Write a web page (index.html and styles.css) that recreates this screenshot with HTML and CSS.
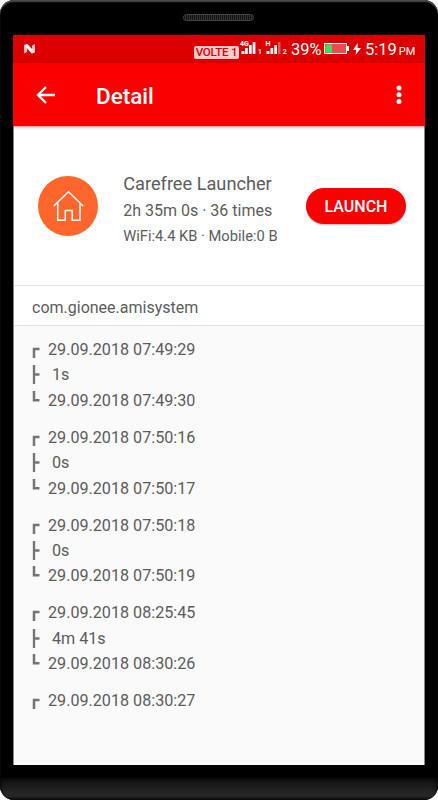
FILE: index.html
```
<!DOCTYPE html>
<html lang="en">
<head>
	<meta charset="UTF-8">
	<title>Detail</title>
	<link rel="stylesheet" href="styles.css">
</head>
<body>
	<svg class="symbols" width="0" height="0">
		<symbol id="start" viewBox="0 0 8 25"><path d="M2 21V12H7.5" fill="none" stroke="#747474" stroke-width="2.5"/></symbol>
		<symbol id="mid" viewBox="0 0 8 25"><path d="M2 3V22M2 12.5H7.5" fill="none" stroke="#747474" stroke-width="2.3"/></symbol>
		<symbol id="end" viewBox="0 0 8 25"><path d="M2 3V12.3H7.5" fill="none" stroke="#747474" stroke-width="2.5"/></symbol>
	</svg>
	<div class="phone">
		<div class="speaker"></div>
		<div class="screen">
			<div class="status">
				<svg class="n-logo" width="11" height="10" viewBox="0 0 11 10">
					<path d="M0 1.5L3 0V8L0 9.5zM8 1.5L11 0V8L8 9.5z" fill="#ffb8b8"/>
					<path d="M0 1L3.4 0L11 8.2L7.6 9.5z" fill="#fff"/>
				</svg>
				<span class="volte">VOLTE 1</span>
				<svg class="signal" width="50" height="16" viewBox="0 0 50 16">
					<g fill="#fff">
						<path d="M1.5 11h3v3h-3zM5 8h2.7v6H5zM9 5h2.7v9H9zM12.7 2h2.7v12h-2.7z"/>
						<path d="M26.5 11h3v3h-3zM30.5 8h2.7v6h-2.7zM34.3 5H37v9h-2.7z"/>
						<path d="M38 2h2.5v12H38z" opacity=".35"/>
						<text x="0" y="6" font-size="7" font-weight="700">4G</text>
						<text x="25.5" y="6" font-size="7" font-weight="700">H</text>
						<text x="17.8" y="14" font-size="7.5" font-weight="500">1</text>
						<text x="42.5" y="14" font-size="7.5" font-weight="500">2</text>
					</g>
				</svg>
				<span class="percent">39%</span>
				<svg class="battery" width="25" height="12" viewBox="0 0 25 12">
					<rect x=".5" y=".5" width="22" height="10" fill="#e84c4c" stroke="#fff"/>
					<path d="M1.5 1.5h6.5v8h-6.5z" fill="#3ddc62"/>
					<path d="M23 3h2v5h-2z" fill="#fff"/>
				</svg>
				<svg class="bolt" width="8" height="12" viewBox="0 0 8 12"><path d="M4.8 0L0 6.7h3.3L2.6 12L8 5H4.5z" fill="#fff"/></svg>
				<div class="clock"><span>5:19</span><small>PM</small></div>
			</div>
			<div class="bar">
				<svg class="back" width="20" height="18" viewBox="0 0 20 18"><path d="M10 1L2 9L10 17M2 9H19" fill="none" stroke="#fff" stroke-width="2.3"/></svg>
				<h1>Detail</h1>
				<svg class="more" width="6" height="20" viewBox="0 0 6 20" fill="#fff"><circle cx="3" cy="3" r="2.5"/><circle cx="3" cy="9.7" r="2.5"/><circle cx="3" cy="16.4" r="2.5"/></svg>
			</div>
			<div class="app">
				<svg class="app-icon" width="60" height="60" viewBox="0 0 60 60">
					<circle cx="30" cy="30" r="30" fill="#ff662b"/>
					<path d="M15.8 30L30.5 15.7L45.2 30M19.7 27V44.3H27.3V34.5H34.2V44.3H42V27" fill="none" stroke="#fff" stroke-width="1.5"/>
				</svg>
				<div class="info">
					<p class="name">Carefree Launcher</p>
					<p class="usage">2h 35m 0s · 36 times</p>
					<p class="traffic">WiFi:4.4 KB · Mobile:0 B</p>
				</div>
				<button class="launch">LAUNCH</button>
			</div>
			<div class="package">com.gionee.amisystem</div>
			<div class="list">
				<ul>
					<li><svg><use href="#start"/></svg>29.09.2018 07:49:29</li>
					<li class="time"><svg><use href="#mid"/></svg>1s</li>
					<li><svg><use href="#end"/></svg>29.09.2018 07:49:30</li>
				</ul>
				<ul>
					<li><svg><use href="#start"/></svg>29.09.2018 07:50:16</li>
					<li class="time"><svg><use href="#mid"/></svg>0s</li>
					<li><svg><use href="#end"/></svg>29.09.2018 07:50:17</li>
				</ul>
				<ul>
					<li><svg><use href="#start"/></svg>29.09.2018 07:50:18</li>
					<li class="time"><svg><use href="#mid"/></svg>0s</li>
					<li><svg><use href="#end"/></svg>29.09.2018 07:50:19</li>
				</ul>
				<ul>
					<li><svg><use href="#start"/></svg>29.09.2018 08:25:45</li>
					<li class="time"><svg><use href="#mid"/></svg>4m 41s</li>
					<li><svg><use href="#end"/></svg>29.09.2018 08:30:26</li>
				</ul>
				<ul>
					<li><svg><use href="#start"/></svg>29.09.2018 08:30:27</li>
				</ul>
			</div>
		</div>
		<div class="chin"></div>
	</div>
</body>
</html>
```
FILE: styles.css
```
*{
	margin: 0;
	padding: 0;
	box-sizing: border-box;
}
body{
	background: #fff;
	font-family: Roboto, "Liberation Sans", sans-serif;
	color: #5c5c5c;
}
ul{
	list-style: none;
}
svg{
	display: block;
	flex-shrink: 0;
}
.symbols{
	position: absolute;
}
.phone{
	width: 438px;
	height: 800px;
	background: #000;
	border-radius: 14px;
	overflow: hidden;
	box-shadow: inset 0 2px 1px #484848;
	display: flex;
	flex-direction: column;
}
.speaker{
	width: 71px;
	height: 7px;
	margin: 14px 0 14px 183px;
	border: 1px solid #444;
	border-radius: 4px;
	background: repeating-linear-gradient(90deg, #111 0, #111 1px, #333 1px, #333 2px);
}
.screen{
	width: 412px;
	height: 730px;
	margin-left: 13px;
	background: #fafafa;
	border-left: 1px solid #888;
	border-right: 1px solid #888;
	display: flex;
	flex-direction: column;
}
.status,
.bar{
	margin: 0 -1px;
	color: #fff;
	display: flex;
	flex-shrink: 0;
}
.status{
	height: 28px;
	background: #dc0000;
	align-items: center;
	padding: 1px 8px 0 11px;
}
.n-logo{
	margin-top: -1px;
}
.volte{
	width: 45px;
	height: 13px;
	margin: 5px 0 0 159px;
	border-radius: 2px;
	background: #facccc;
	color: #d80000;
	font-size: 11.5px;
	font-weight: 500;
	line-height: 13px;
	letter-spacing: -.2px;
	text-align: center;
	white-space: nowrap;
}
.signal{
	margin: -4px 0 0 1px;
}
.percent{
	width: 31px;
	font-size: 16.5px;
	margin-left: 1px;
}
.battery{
	margin: -1px 0 0 2px;
}
.bolt{
	margin: -1px 0 0 4px;
}
.clock{
	display: flex;
	align-items: baseline;
	gap: 2px;
	margin-left: 4px;
	font-size: 16.5px;
}
.clock small{
	font-size: 11px;
}
.bar{
	height: 63px;
	background: #fb0000;
	box-shadow: 0 1px 3px rgba(0,0,0,.4);
	align-items: center;
	padding: 0 23px;
	z-index: 1;
}
.bar h1{
	margin-left: 40px;
	font-size: 22.5px;
	font-weight: 500;
	line-height: 26px;
	padding-top: 2px;
	flex: 1;
}
.app{
	height: 160px;
	background: #fff;
	border-bottom: 1px solid #e4e4e4;
	display: flex;
	align-items: center;
	padding: 1px 18px 0 24.4px;
	flex-shrink: 0;
}
.info{
	margin: 4px 0 0 24.8px;
	flex: 1;
	white-space: nowrap;
}
.name{
	font-size: 18.2px;
	line-height: 29px;
}
.usage{
	font-size: 16px;
	line-height: 26px;
}
.traffic{
	font-size: 14.7px;
	line-height: 24px;
}
.launch{
	width: 100px;
	height: 36px;
	border: 0;
	border-radius: 18px;
	background: #fb0000;
	box-shadow: 0 1px 2px rgba(0,0,0,.25);
	color: #fff;
	font: 500 16px/37px Roboto, sans-serif;
}
.package{
	height: 40px;
	background: #fff;
	border-bottom: 1px solid #e4e4e4;
	padding: 2px 0 0 18px;
	font-size: 16px;
	line-height: 39px;
	flex-shrink: 0;
}
.list{
	padding: 11px 0 0 18px;
}
.list ul{
	margin-bottom: 11.6px;
}
.list li{
	height: 25.4px;
	display: flex;
	font-size: 16.15px;
	line-height: 26px;
}
.list svg{
	width: 8px;
	height: 25px;
	margin-right: 8px;
}
.list .time svg{
	margin-right: 12px;
}
.chin{
	height: 22px;
	margin-top: 13px;
	background: linear-gradient(#111, #2b2b2b 85%, #111);
	box-shadow: inset 0 0 6px #000;
}
```
